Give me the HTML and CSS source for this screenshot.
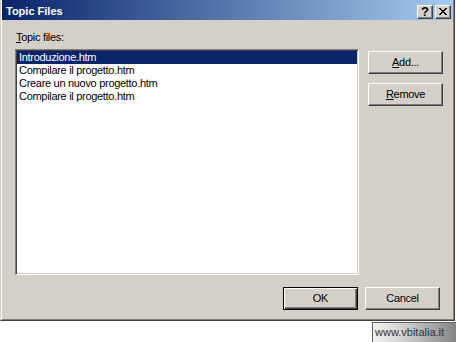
FILE: index.html
```html
<!DOCTYPE html>
<html>
<head>
<meta charset="utf-8">
<link rel="stylesheet" href="styles.css">
</head>
<body>
<div class="window">
  <div class="frame">
    <div class="titlebar">
      <span class="title">Topic Files</span>
      <div class="tbtns">
        <span class="tbtn">?</span>
        <span class="tbtn tclose">
          <svg width="8" height="7" viewBox="0 0 8 7"><path d="M0 0h2v1h-2zM6 0h2v1h-2zM1 1h2v1h-2zM5 1h2v1h-2zM2 2h4v1h-4zM3 3h2v1h-2zM2 4h4v1h-4zM1 5h2v1h-2zM5 5h2v1h-2zM0 6h2v1h-2zM6 6h2v1h-2z" fill="#000"/></svg>
        </span>
      </div>
    </div>
    <div class="content">
      <div class="label"><u>T</u>opic files:</div>
      <div class="main">
        <div class="listbox">
          <div class="item selected">Introduzione.htm</div>
          <div class="item">Compilare il progetto.htm</div>
          <div class="item">Creare un nuovo progetto.htm</div>
          <div class="item">Compilare il progetto.htm</div>
        </div>
        <div class="sidebtns">
          <div class="btn"><span><u>A</u>dd...</span></div>
          <div class="btn"><span><u>R</u>emove</span></div>
        </div>
      </div>
      <div class="bottom">
        <div class="btn default"><span>OK</span></div>
        <div class="btn"><span>Cancel</span></div>
      </div>
    </div>
  </div>
</div>
<div class="footer">
  <div class="watermark">www.vbitalia.it</div>
</div>
</body>
</html>
```
FILE: styles.css
```css
html, body {
  margin: 0;
  padding: 0;
  background: #ffffff;
}
body {
  width: 456px;
  font-family: "Liberation Sans", Arial, sans-serif;
  font-size: 11px;
  color: #000;
}
.window {
  box-sizing: border-box;
  width: 455px;
  height: 321px;
  background: #d4d0c8;
  border-left: 1px solid #d4d0c8;
  border-right: 1px solid #404040;
  border-bottom: 1px solid #404040;
}
.frame {
  box-sizing: border-box;
  height: 100%;
  border-left: 1px solid #ffffff;
  border-right: 1px solid #808080;
  border-bottom: 1px solid #808080;
  display: flex;
  flex-direction: column;
}
.titlebar {
  height: 20px;
  flex: none;
  background: linear-gradient(to right, #0a246a, #a6caf0);
  display: flex;
  align-items: flex-start;
  justify-content: space-between;
  padding: 0 2px 0 3px;
}
.title {
  color: #ffffff;
  font-weight: bold;
  font-size: 11px;
  line-height: 13px;
  padding-top: 5px;
  padding-left: 1px;
}
.tbtns {
  display: flex;
  gap: 2px;
  padding-top: 5px;
}
.tbtn {
  box-sizing: border-box;
  width: 16px;
  height: 14px;
  background: #d4d0c8;
  border-top: 1px solid #ffffff;
  border-left: 1px solid #ffffff;
  border-right: 1px solid #404040;
  border-bottom: 1px solid #404040;
  box-shadow: inset -1px -1px 0 #808080;
  display: flex;
  align-items: center;
  justify-content: center;
  font-weight: bold;
  font-size: 13px;
  line-height: 12px;
  font-family: "Liberation Sans", Arial, sans-serif;
}
.tclose svg {
  display: block;
  margin-top: -1px;
}
.content {
  flex: 1;
  padding: 11px 13px 0 13px;
  display: flex;
  flex-direction: column;
  letter-spacing: -0.3px;
}
.label {
  line-height: 13px;
  height: 13px;
  padding-left: 1px;
  margin-bottom: 5px;
}
.main {
  display: grid;
  grid-template-columns: 344px 75px;
  column-gap: 9px;
}
.listbox {
  box-sizing: border-box;
  height: 226px;
  background: #ffffff;
  border-top: 1px solid #808080;
  border-left: 1px solid #808080;
  border-right: 1px solid #ffffff;
  border-bottom: 1px solid #ffffff;
  box-shadow: inset 1px 1px 0 #404040, inset -1px -1px 0 #d4d0c8;
  padding: 1px;
}
.item {
  height: 13px;
  line-height: 13px;
  padding-left: 2px;
  white-space: nowrap;
}
.item.selected {
  background: #0a246a;
  color: #ffffff;
}
.sidebtns {
  display: flex;
  flex-direction: column;
  gap: 9px;
  padding-top: 2px;
}
.btn {
  box-sizing: border-box;
  width: 75px;
  height: 23px;
  background: #d4d0c8;
  border-top: 1px solid #ffffff;
  border-left: 1px solid #ffffff;
  border-right: 1px solid #404040;
  border-bottom: 1px solid #404040;
  box-shadow: inset -1px -1px 0 #808080;
  display: flex;
  align-items: center;
  justify-content: center;
  line-height: 13px;
}
.btn.default {
  border: 1px solid #000000;
  box-shadow: inset 1px 1px 0 #ffffff, inset -1px -1px 0 #404040, inset -2px -2px 0 #808080;
}
.bottom {
  display: flex;
  justify-content: flex-end;
  gap: 7px;
  margin-top: 12px;
}
.footer {
  display: flex;
  justify-content: flex-end;
  width: 456px;
  margin-top: 1px;
}
.watermark {
  box-sizing: border-box;
  width: 84px;
  height: 20px;
  border-top: 1px solid #606060;
  border-left: 1px solid #606060;
  background: linear-gradient(to right, #f2f2f2, #d8d8d8 30%, #858585);
  color: #333333;
  font-family: "Liberation Sans", Arial, sans-serif;
  font-size: 11px;
  line-height: 18px;
  padding-left: 2px;
}
```
